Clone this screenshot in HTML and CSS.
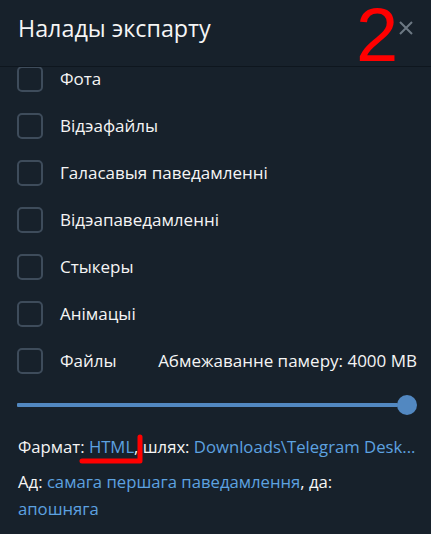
FILE: index.html
```html
<!DOCTYPE html>
<html lang="be">
<head>
<meta charset="utf-8">
<title>Налады экспарту</title>
<link rel="stylesheet" href="styles.css">
</head>
<body>
<div class="box">
  <div class="header">
    <div class="title">Налады экспарту</div>
    <div class="close">
      <svg width="14" height="14" viewBox="0 0 14 14"><path d="M1 1L13 13M13 1L1 13" stroke="#6c7883" stroke-width="2"/></svg>
    </div>
  </div>
  <div class="content">
    <div class="list">
      <div class="row"><span class="cb"></span><span class="lbl">Фота</span></div>
      <div class="row"><span class="cb"></span><span class="lbl">Відэафайлы</span></div>
      <div class="row"><span class="cb"></span><span class="lbl">Галасавыя паведамленні</span></div>
      <div class="row"><span class="cb"></span><span class="lbl">Відэапаведамленні</span></div>
      <div class="row"><span class="cb"></span><span class="lbl">Стыкеры</span></div>
      <div class="row"><span class="cb"></span><span class="lbl">Анімацыі</span></div>
      <div class="row"><span class="cb"></span><span class="lbl">Файлы</span><span class="limit">Абмежаванне памеру: 4000 MB</span></div>
    </div>
    <div class="slider"><div class="track"></div><div class="thumb"></div></div>
    <div class="info">
      <p class="line nowrap">Фармат: <span class="link">HTML</span>, шлях: <span class="link">Downloads\Telegram Desk...</span></p>
      <p class="line">Ад: <span class="link">самага першага паведамлення</span>, да: <span class="link">апошняга</span></p>
    </div>
  </div>
  <div class="mark-two">2</div>
  <svg class="mark-line" width="70" height="34" viewBox="0 0 70 34"><path d="M3 28H61V4" fill="none" stroke="#f00" stroke-width="5" stroke-linecap="round" stroke-linejoin="round"/></svg>
</div>
</body>
</html>
```
FILE: styles.css
```css
html, body {
  margin: 0;
  padding: 0;
  background: #17212b;
}
body {
  font-family: "Open Sans", "Noto Sans", sans-serif;
  color: #f5f5f5;
}
.box {
  position: relative;
  width: 431px;
  height: 534px;
  overflow: hidden;
  background: #17212b;
}
.header {
  height: 66px;
  border-bottom: 1px solid #0e161e;
  display: flex;
  align-items: flex-start;
  justify-content: space-between;
  padding: 0 18px 0 18px;
  position: relative;
  z-index: 2;
  background: #17212b;
}
.title {
  font-size: 23.3px;
  line-height: 30px;
  margin-top: 13px;
  font-weight: 400;
  color: #f5f5f5;
}
.close {
  margin-top: 21px;
  width: 14px;
  height: 14px;
}
.close svg { display: block; }
.content {
  padding: 0 14px 0 17px;
}
.list {
  display: flex;
  flex-direction: column;
  gap: 21px;
  margin-top: -1px;
}
.row {
  display: flex;
  align-items: center;
  height: 26px;
}
.cb {
  width: 22px;
  height: 22px;
  border: 2px solid #3e4c5b;
  border-radius: 5px;
  flex: none;
}
.lbl {
  margin-left: 17px;
  font-size: 17px;
  line-height: 22px;
}
.limit {
  margin-left: auto;
  font-size: 17px;
  line-height: 22px;
}
.slider {
  position: relative;
  height: 20px;
  margin-top: 21px;
  display: flex;
  align-items: center;
}
.track {
  height: 4px;
  width: 383px;
  background: #5288c1;
  border-radius: 1px;
}
.thumb {
  width: 20px;
  height: 20px;
  border-radius: 50%;
  background: #5288c1;
  margin-left: -1px;
}
.info {
  margin-top: 18px;
  padding-left: 1px;
  width: 398px;
}
.line {
  margin: 0;
  font-size: 16.7px;
  line-height: 27px;
}
.nowrap { white-space: nowrap; }
.line + .line { margin-top: 8px; }
.link {
  color: #5da2e0;
}
.mark-two {
  position: absolute;
  left: 356px;
  top: -3px;
  font-family: "Liberation Sans", Arial, sans-serif;
  font-size: 76px;
  line-height: 76px;
  color: #ff0000;
  z-index: 3;
}
.mark-line {
  position: absolute;
  left: 79px;
  top: 433px;
  z-index: 3;
}
```
